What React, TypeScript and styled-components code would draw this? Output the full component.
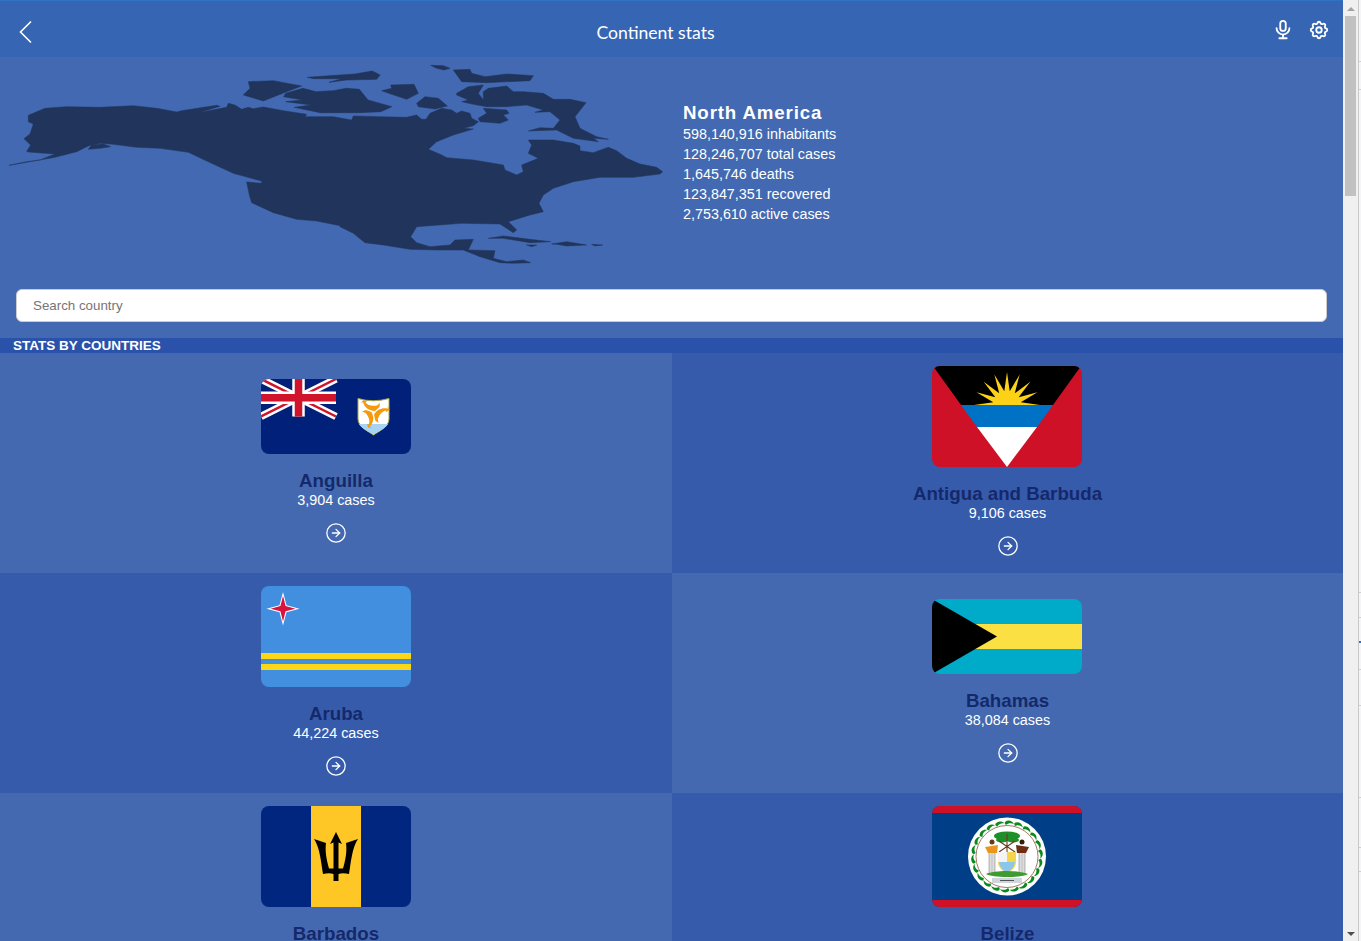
import { ReactNode } from 'react'
import styled, { createGlobalStyle } from 'styled-components'
import { CircleArrowRight } from 'lucide-react'
import { TbMicrophone, TbSettings } from 'react-icons/tb'

const GlobalStyle = createGlobalStyle`
  html, body {
    margin: 0;
    height: 100%;
    overflow: hidden;
    font-family: "Liberation Sans", Arial, sans-serif;
  }
  * {
    box-sizing: border-box;
  }
`

const Page = styled.div`
  display: flex;
  width: 1361px;
  height: 941px;
  overflow: hidden;
  background: #f5f5f8;
`

const Main = styled.div`
  display: flex;
  flex-direction: column;
  flex-shrink: 0;
  width: 1343px;
  height: 941px;
  overflow: hidden;
  background: #4269b1;
`

const Header = styled.header`
  display: flex;
  align-items: center;
  flex-shrink: 0;
  height: 57px;
  padding: 6px 13px 0 18px;
  background: #3665b3;
  border-top: 1px solid #2f74c4;
  color: #fff;
`

const BackButton = styled.button`
  display: flex;
  align-items: center;
  width: 21px;
  height: 30px;
  padding: 0;
  border: 0;
  background: none;
  color: #fff;
`

const Title = styled.div`
  flex: 1;
  text-align: center;
  font-family: Lato, sans-serif;
  font-size: 17.6px;
`

const HeaderIcons = styled.div`
  display: flex;
  align-items: center;
  gap: 14px;
  margin-top: -4px;
`

const Hero = styled.section`
  display: flex;
  flex-shrink: 0;
  height: 224px;
`

const MapShape = styled.svg`
  flex-shrink: 0;
  width: 683px;
  height: 224px;
  fill: #20345c;
  stroke: #20345c;
  stroke-width: 1.5;
  stroke-linejoin: round;
`

const HeroInfo = styled.div`
  display: flex;
  flex-direction: column;
  padding-top: 45px;
  color: #fff;
  font-size: 14.35px;
  line-height: 20px;
`

const HeroName = styled.h2`
  margin: 0;
  font-size: 18.72px;
  font-weight: 700;
  line-height: 22px;
  letter-spacing: 0.85px;
`

const SearchRow = styled.div`
  flex-shrink: 0;
  height: 57px;
  padding: 8px 16px 0;
`

const SearchInput = styled.input`
  display: block;
  width: 100%;
  height: 33px;
  padding: 0 16px;
  border: 1px solid #ccc;
  border-radius: 6px;
  background: #fff;
  font-family: inherit;
  font-size: 13.33px;
  &::placeholder {
    color: #757575;
  }
`

const SectionBar = styled.div`
  flex-shrink: 0;
  height: 15px;
  padding-left: 13px;
  background: #2a52aa;
  color: #fff;
  font-size: 13.5px;
  font-weight: 700;
  line-height: 15px;
`

const Grid = styled.div`
  display: grid;
  grid-template-columns: 672px 671px;
  grid-auto-rows: 220px;
`

const Cell = styled.div<{ $dark: boolean }>`
  display: flex;
  flex-direction: column;
  align-items: center;
  justify-content: center;
  background: ${({ $dark }) => ($dark ? '#375bab' : '#4469b0')};
`

const FlagFrame = styled.div<{ $tall: boolean; $nudge: boolean }>`
  flex-shrink: 0;
  width: 150px;
  height: ${({ $tall }) => ($tall ? 101 : 75)}px;
  margin-left: ${({ $nudge }) => ($nudge ? -1 : 0)}px;
  border-radius: 8px;
  overflow: hidden;
  svg {
    display: block;
  }
`

const CountryName = styled.div`
  margin-top: 17px;
  color: #14296b;
  font-size: 18.72px;
  font-weight: 700;
  line-height: 20px;
`

const Cases = styled.div`
  min-height: 18px;
  color: #fff;
  font-size: 14.35px;
  line-height: 18px;
`

const Go = styled.div`
  display: flex;
  flex-shrink: 0;
  margin: 13px 0 4px;
  color: #fff;
`

const ScrollTrack = styled.div`
  display: flex;
  flex-direction: column;
  align-items: center;
  flex-shrink: 0;
  width: 15px;
  height: 941px;
  background: #f0f0f0;
`

const ScrollArrow = styled.div<{ $down?: boolean }>`
  flex-shrink: 0;
  width: 0;
  height: 0;
  margin: ${({ $down }) => ($down ? 'auto 0 5px' : '7px 0 5px')};
  border-left: 4px solid transparent;
  border-right: 4px solid transparent;
  ${({ $down }) =>
    $down ? 'border-top: 4px solid #505050;' : 'border-bottom: 4px solid #a3a3a3;'}
`

const ScrollThumb = styled.div`
  flex-shrink: 0;
  width: 11px;
  height: 180px;
  background: #c1c1c1;
`

const Sliver = styled.div`
  display: flex;
  flex-direction: column;
  flex-shrink: 0;
  width: 3px;
  height: 941px;
  border-left: 1px solid #c9c9c9;
`

const SliverPiece = styled.div<{ $h: number; $accent?: boolean }>`
  flex-shrink: 0;
  height: ${({ $h }) => $h}px;
  border-bottom: ${({ $accent }) => ($accent ? '2px solid #2a6de0' : '1px solid #cfcfcf')};
`

// 轮廓点都是从截图放大后量出来的，单位是 1/3 像素
const WEST =
  '27,316 80,305 120,300 165,282 85,276 80,274 92,255 72,236 90,222 100,192 85,185 85,166 135,145 200,140 300,142 400,137 470,145 530,156 545,152 650,136 660,139 595,158 680,142 685,130 705,135 725,148 745,142 760,146 790,141 850,152 920,163 915,170 1000,170'
const EAST =
  '35,180 40,168 120,170 200,172 230,165 245,178 258,178 270,160 305,145 335,150 350,160 365,153 390,160 395,175 415,185 400,197 370,205 400,207 340,225 290,245 265,268 305,285 320,293 400,300 490,315 495,330 530,345 550,335 545,315 595,295 565,280 575,255 565,240 640,240 700,250 720,258 720,272 760,278 805,262 830,272 860,295 900,312 950,322 968,335 960,342 880,352 780,352 700,365 640,385 610,405 597,430 610,455 570,465 505,485 530,510 520,518 480,492 365,490 230,500 212,530 230,548 270,560 330,555 345,540 400,538 385,570 465,572 460,595 500,605 550,600 572,608 520,610 480,608 420,590 370,570 290,570 210,568 130,555 75,548 40,520 0,500'
const WEST_COAST =
  '1020,497 950,483 890,478 820,458 755,428 748,405 740,366 785,370 785,363 700,340 620,303 565,277 480,265 410,262 340,253 300,250 265,258 230,275 165,292'

const shiftPoints = (points: string, dx: number) =>
  points
    .split(' ')
    .map((p) => {
      const [x, y] = p.split(',').map(Number)
      return `${x + dx},${y}`
    })
    .join(' ')

const MAINLAND = `${WEST} ${shiftPoints(EAST, 1020)} ${WEST_COAST}`

const ISLANDS_WEST = [
  '265,268 275,255 310,252 332,260 300,265',
  '745,65 820,62 905,78 860,95 790,123 730,105 750,85',
]

// 这一组量自第一张放大图，横向比例不一样
const ISLANDS_MIDDLE = [
  '660,280 700,265 730,275 770,272 800,265 830,268 850,300 905,320 880,335 830,338 740,338 680,322 720,315 660,305 700,300 655,290',
  '710,232 820,222 860,213 878,225 870,238 800,240 760,247 790,236 725,236',
]

const ISLANDS_EAST = [
  '350,100 385,80 430,75 415,100 430,120 430,95 445,85 500,78 520,95 550,95 610,100 640,118 690,118 738,128 705,170 720,205 770,230 805,238 760,235 775,245 700,235 650,210 565,213 600,203 640,205 660,180 630,155 585,157 610,150 560,135 500,140 440,140 400,133 365,125 385,120 350,105',
  '430,145 500,150 507,160 490,165 505,180 480,190 420,185 415,175 440,160',
  '445,535 490,528 570,538 632,545 570,548 490,535',
  '635,552 680,545 740,555 680,558 650,553',
  '560,555 590,555 575,560',
  '755,553 788,555 765,558',
  '272,16 310,17 330,25 312,30 290,25',
  '340,30 390,28 395,40 435,50 500,42 580,47 570,62 440,68 365,65',
  '125,92 155,85 152,75 222,73 235,100 200,118 155,103',
  '230,130 255,110 295,115 322,138 285,147 235,140',
]

const Map = () => (
  <MapShape viewBox="0 57 683 224" aria-hidden>
    <g transform="translate(0 60) scale(.33333)">
      <polygon points={MAINLAND} />
      {ISLANDS_WEST.map((p) => (
        <polygon key={p} points={p} />
      ))}
    </g>
    <g transform="scale(.4329 .33333)">
      {ISLANDS_MIDDLE.map((p) => (
        <polygon key={p} points={p} />
      ))}
    </g>
    <g transform="translate(340 60) scale(.33333)">
      {ISLANDS_EAST.map((p) => (
        <polygon key={p} points={p} />
      ))}
    </g>
  </MapShape>
)

const Shield = () => (
  <g>
    <path d="M97 19.5Q112 24 128 19.5V40C128 48 118 52 112.5 56C107 52 97 48 97 40Z" fill="#fff" stroke="#a8a64e" />
    <path d="M98 45H127C125 49 117 53 112.5 55.5C108 53 100 49 98 45Z" fill="#a9d3f2" />
    {[0, 120, 240].map((deg) => (
      <path
        key={deg}
        d="M114 32C108 32 103.5 28.5 102 23L100 24.5L102 21L106 22.5L104.5 23.5C106.5 26 110 27.5 116 26.5L119 24L118.5 28Z"
        fill="#f59a0c"
        transform={`rotate(${deg} 112.5 33.5)`}
      />
    ))}
  </g>
)

const Anguilla = () => (
  <svg width="150" height="75" viewBox="0 0 150 75">
    <rect width="150" height="75" fill="#00207a" />
    <path d="M0 0L75 37.5M75 0L0 37.5" stroke="#fff" strokeWidth="7.5" />
    <path d="M0 0L75 37.5M75 0L0 37.5" stroke="#cf142b" strokeWidth="2.5" />
    <path d="M37.5 0V37.5M0 18.75H75" stroke="#fff" strokeWidth="12.5" />
    <path d="M37.5 0V37.5M0 18.75H75" stroke="#cf142b" strokeWidth="7.5" />
    <Shield />
  </svg>
)

const sunPoints = () => {
  const pts: string[] = []
  for (let i = 0; i <= 16; i++) {
    const r = i % 2 === 0 ? 33 : 14
    const a = Math.PI + (i * Math.PI) / 16
    pts.push(`${75 + r * Math.cos(a)},${39 + r * Math.sin(a)}`)
  }
  return pts.join(' ')
}

const Antigua = () => (
  <svg width="150" height="101" viewBox="0 0 150 101">
    <rect width="150" height="101" fill="#ce1126" />
    <polygon points="1,0 149,0 121,39 29,39" fill="#000" />
    <polygon points={sunPoints()} fill="#fcd116" />
    <polygon points="29,39 121,39 105,61 45,61" fill="#0072c6" />
    <polygon points="45,61 105,61 75,101" fill="#fff" />
  </svg>
)

const Aruba = () => (
  <svg width="150" height="101" viewBox="0 0 150 101">
    <rect width="150" height="101" fill="#418fde" />
    <rect y="67" width="150" height="6" fill="#fbd716" />
    <rect y="78" width="150" height="6" fill="#fbd716" />
    <path d="M22 6L25.5 19.2L38.5 22.7L25.5 26.2L22 39.5L18.5 26.2L5.5 22.7L18.5 19.2Z" fill="#fff" />
    <path d="M22 10L24.6 20.1L34.5 22.7L24.6 25.3L22 35.5L19.4 25.3L9.5 22.7L19.4 20.1Z" fill="#d9123e" />
  </svg>
)

const Bahamas = () => (
  <svg width="150" height="75" viewBox="0 0 150 75">
    <rect width="150" height="75" fill="#00abc9" />
    <rect y="25" width="150" height="25" fill="#fae042" />
    <polygon points="0,0 65,37.5 0,75" fill="#000" />
  </svg>
)

const Barbados = () => (
  <svg width="150" height="101" viewBox="0 0 150 101">
    <rect width="150" height="101" fill="#00267f" />
    <rect x="50" width="50" height="101" fill="#ffc726" />
    <path d="M75 26L81 38L77.5 36.5V62.5H82C85 52 86 44 85 37L97 33C91 42 90 56 88 68C84 67 80 67 77.5 68V75H72.5V68C70 67 66 67 62 68C60 56 59 42 53 33L65 37C64 44 65 52 68 62.5H72.5V36.5L69 38Z" fill="#000" />
  </svg>
)

const WREATH = Array.from({ length: 22 }, (_, i) => (i * 360) / 22)

const Belize = () => (
  <svg width="150" height="101" viewBox="0 0 150 101">
    <rect width="150" height="101" fill="#003f87" />
    <rect width="150" height="7" fill="#ce1126" />
    <rect y="94" width="150" height="7" fill="#ce1126" />
    <circle cx="75" cy="50.5" r="39" fill="#fff" />
    <circle cx="75" cy="50.5" r="31" fill="none" stroke="#8a5a3a" strokeWidth="0.8" />
    {WREATH.map((deg) => (
      <path
        key={deg}
        d="M73 16C76 13.5 80 14.5 82 18C79 16.5 76 17 74 19C73 18 72.5 17 73 16Z"
        fill="#0a8a1c"
        transform={`rotate(${deg} 75 50.5)`}
      />
    ))}
    <ellipse cx="75" cy="30" rx="13" ry="4.5" fill="#1f8f2a" />
    <ellipse cx="70" cy="34" rx="6" ry="2.5" fill="#1f8f2a" />
    <ellipse cx="81" cy="34" rx="6" ry="2.5" fill="#1f8f2a" />
    <path d="M75 28V46M67 35L83 46M83 35L67 46" stroke="#6a3b1f" strokeWidth="1.1" />
    <rect x="56" y="46" width="8" height="23" fill="#dcdcdc" />
    <rect x="86" y="46" width="8" height="23" fill="#dcdcdc" />
    <path d="M57.5 46V69M60 46V69M62.5 46V69M87.5 46V69M90 46V69M92.5 46V69" stroke="#a8a8a8" strokeWidth="0.5" />
    <circle cx="60" cy="36" r="2.5" fill="#6b3a12" />
    <path d="M53 41L66 39L65 47H56Z" fill="#e8971e" />
    <circle cx="90" cy="36" r="2.5" fill="#3a1c0c" />
    <path d="M84 39L97 41L94 47H85Z" fill="#6e2e12" />
    <path d="M66 46H84V56C84 62 79 65 75 67C71 65 66 62 66 56Z" fill="#f3d64a" />
    <path d="M66 46H75V56H66Z" fill="#f4f4f4" />
    <path d="M67 56H83C82 62 78 65 75 67C72 65 68 62 67 56Z" fill="#8cc6ea" />
    <path d="M54 68C62 64 88 64 96 68C90 72 60 72 54 68Z" fill="#3f9b2d" />
    <path d="M60 72H90V77H60Z" fill="#cfd6e0" />
    <path d="M68 74.5H82" stroke="#555" strokeWidth="1" />
  </svg>
)

type Country = {
  name: string
  cases?: string
  tall: boolean
  flag: ReactNode
}

const COUNTRIES: Country[] = [
  { name: 'Anguilla', cases: '3,904 cases', tall: false, flag: <Anguilla /> },
  { name: 'Antigua and Barbuda', cases: '9,106 cases', tall: true, flag: <Antigua /> },
  { name: 'Aruba', cases: '44,224 cases', tall: true, flag: <Aruba /> },
  { name: 'Bahamas', cases: '38,084 cases', tall: false, flag: <Bahamas /> },
  { name: 'Barbados', tall: true, flag: <Barbados /> },
  { name: 'Belize', tall: true, flag: <Belize /> },
]

const STATS = [
  '598,140,916 inhabitants',
  '128,246,707 total cases',
  '1,645,746 deaths',
  '123,847,351 recovered',
  '2,753,610 active cases',
]

const SLIVER = [62, 28, 503, 25, 25, 27, 36, 92, 50, 24]

const App = () => {
  return (
    <>
      <GlobalStyle />
      <Page>
        <Main>
          <Header>
            <BackButton aria-label="back">
              <svg width="16" height="24" viewBox="0 0 16 24" fill="none" stroke="currentColor" strokeWidth="1.6">
                <path d="M13 1.5L2.5 12L13 22.5" />
              </svg>
            </BackButton>
            <Title>Continent stats</Title>
            <HeaderIcons>
              <TbMicrophone size={22} strokeWidth={2} />
              <TbSettings size={22} strokeWidth={2} />
            </HeaderIcons>
          </Header>

          <Hero>
            <Map />
            <HeroInfo>
              <HeroName>North America</HeroName>
              {STATS.map((s) => (
                <div key={s}>{s}</div>
              ))}
            </HeroInfo>
          </Hero>

          <SearchRow>
            <SearchInput placeholder="Search country" />
          </SearchRow>

          <SectionBar>STATS BY COUNTRIES</SectionBar>

          <Grid>
            {COUNTRIES.map((c, i) => (
              <Cell key={c.name} $dark={(i + Math.floor(i / 2)) % 2 === 1}>
                <FlagFrame $tall={c.tall} $nudge={i % 2 === 1}>
                  {c.flag}
                </FlagFrame>
                <CountryName>{c.name}</CountryName>
                <Cases>{c.cases}</Cases>
                <Go>
                  <CircleArrowRight size={22} strokeWidth={1.4} />
                </Go>
              </Cell>
            ))}
          </Grid>
        </Main>

        <ScrollTrack>
          <ScrollArrow />
          <ScrollThumb />
          <ScrollArrow $down />
        </ScrollTrack>

        <Sliver>
          {SLIVER.map((h, i) => (
            <SliverPiece key={i} $h={h} $accent={i === 4} />
          ))}
        </Sliver>
      </Page>
    </>
  )
}

export default App
